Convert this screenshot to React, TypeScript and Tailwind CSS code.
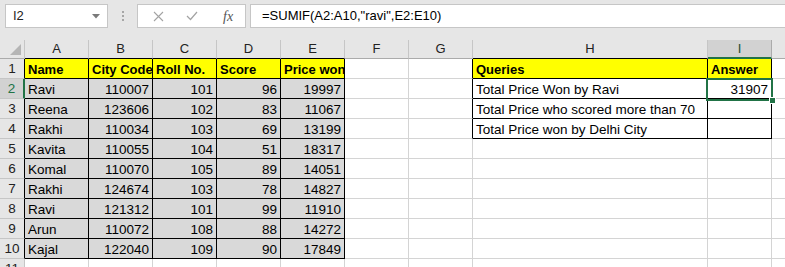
import React from 'react';

type Col = { key: string; w: string };

const COLS: Col[] = [
  { key: 'A', w: 'w-[64px]' },
  { key: 'B', w: 'w-[64px]' },
  { key: 'C', w: 'w-[64px]' },
  { key: 'D', w: 'w-[64px]' },
  { key: 'E', w: 'w-[64px]' },
  { key: 'F', w: 'w-[64px]' },
  { key: 'G', w: 'w-[64px]' },
  { key: 'H', w: 'w-[235px]' },
  { key: 'I', w: 'w-[64px]' },
];

const PEOPLE: (string | number)[][] = [
  ['Ravi', 110007, 101, 96, 19997],
  ['Reena', 123606, 102, 83, 11067],
  ['Rakhi', 110034, 103, 69, 13199],
  ['Kavita', 110055, 104, 51, 18317],
  ['Komal', 110070, 105, 89, 14051],
  ['Rakhi', 124674, 103, 78, 14827],
  ['Ravi', 121312, 101, 99, 11910],
  ['Arun', 110072, 108, 88, 14272],
  ['Kajal', 122040, 109, 90, 17849],
];

const HEAD = ['Name', 'City Code', 'Roll No.', 'Score', 'Price won'];

const QUERIES = [
  'Total Price Won by Ravi',
  'Total Price who scored more than 70',
  'Total Price won by Delhi City',
];

type CellInfo = {
  text: string;
  num?: boolean;
  bold?: boolean;
  fill?: 'yellow' | 'grey';
  rBlack?: boolean;
  bBlack?: boolean;
};

function cellAt(row: number, c: number): CellInfo {
  // c: 0..8 => A..I
  if (row >= 1 && row <= 10 && c <= 4) {
    if (row === 1) return { text: HEAD[c], bold: true, fill: 'yellow', rBlack: true, bBlack: true };
    const v = PEOPLE[row - 2][c];
    return { text: String(v), num: typeof v === 'number', fill: 'grey', rBlack: true, bBlack: true };
  }
  if (row >= 1 && row <= 4 && c >= 7) {
    if (row === 1)
      return { text: c === 7 ? 'Queries' : 'Answer', bold: true, fill: 'yellow', rBlack: true, bBlack: true };
    if (c === 7) return { text: QUERIES[row - 2], rBlack: true, bBlack: true };
    return { text: row === 2 ? '31907' : '', num: true, rBlack: true, bBlack: true };
  }
  if (c === 6 && row >= 1 && row <= 4) return { text: '', rBlack: true };
  return { text: '' };
}

function Cell({ row, c }: { row: number; c: number }) {
  const info = cellAt(row, c);
  return (
    <div
      className={[
        'h-[20px] shrink-0 overflow-hidden whitespace-nowrap border-r border-b px-[3px] pt-[1px] leading-[19px] text-black',
        COLS[c].w,
        info.bold ? 'text-[13px] font-bold' : 'text-[13.5px]',
        info.rBlack ? 'border-r-black' : 'border-r-[#d4d4d4]',
        info.bBlack ? 'border-b-black' : 'border-b-[#d4d4d4]',
        info.fill === 'yellow' ? 'bg-[#ffff00]' : info.fill === 'grey' ? 'bg-[#d9d9d9]' : 'bg-white',
        info.num ? 'text-right' : 'text-left',
      ].join(' ')}
    >
      {info.text}
    </div>
  );
}

function HeaderRow() {
  return (
    <div className="flex h-[19px]">
      <div className="relative h-[19px] w-[25px] shrink-0 border-r border-b border-r-[#c6c6c6] border-b-[#ababab] bg-[#e6e6e6]">
        <svg className="absolute right-[3px] bottom-[3px]" width="11" height="11" viewBox="0 0 11 11">
          <polygon points="11,0 11,11 0,11" fill="#b5b5b5" />
        </svg>
      </div>
      {COLS.map((col) => {
        const sel = col.key === 'I';
        const tableTop = ['A', 'B', 'C', 'D', 'E', 'H'].includes(col.key);
        return (
          <div
            key={col.key}
            className={[
              'h-[19px] shrink-0 border-r text-center text-[13px] leading-[18px]',
              col.w,
              sel
                ? 'border-b-2 border-r-[#ababab] border-b-[#217346] bg-[#d2d2d2] text-[#1e4e33]'
                : 'border-b border-r-[#c6c6c6] bg-[#e6e6e6] text-[#222]',
              !sel && tableTop ? 'border-b-black' : !sel ? 'border-b-[#ababab]' : '',
            ].join(' ')}
          >
            {col.key}
          </div>
        );
      })}
      <div className="h-[19px] flex-1 border-b border-b-[#ababab] bg-[#e6e6e6]" />
    </div>
  );
}

function DataRow({ row }: { row: number }) {
  const sel = row === 2;
  const inTable = row <= 10;
  return (
    <div className="flex h-[20px]">
      <div
        className={[
          'h-[20px] w-[25px] shrink-0 border-b border-b-[#c6c6c6] text-center text-[13.5px] leading-[20px]',
          sel
            ? 'border-r-2 border-r-[#217346] bg-[#d2d2d2] text-[#217346]'
            : inTable
              ? 'border-r border-r-black bg-[#e6e6e6] text-[#222]'
              : 'border-r border-r-[#c6c6c6] bg-[#e6e6e6] text-[#222]',
        ].join(' ')}
      >
        {row}
      </div>
      {COLS.map((col, c) => (
        <Cell key={col.key} row={row} c={c} />
      ))}
      <div className="h-[20px] flex-1 border-b border-b-[#d4d4d4] bg-white" />
    </div>
  );
}

function FormulaBar() {
  return (
    <div className="flex h-[40px] items-start bg-[#e6e6e6] pt-[4px]">
      <div className="ml-[5px] flex h-[24px] w-[103px] items-center justify-between border border-[#c6c6c6] bg-white pl-[7px] pr-[7px]">
        <span className="text-[13px] text-[#222]">I2</span>
        <svg width="8" height="5" viewBox="0 0 8 5">
          <polygon points="0,0 8,0 4,4.5" fill="#7a7a7a" />
        </svg>
      </div>
      <div className="flex h-[24px] w-[29px] flex-col items-center justify-center gap-[2px]">
        <span className="h-[2px] w-[2px] bg-[#a6a6a6]" />
        <span className="h-[2px] w-[2px] bg-[#a6a6a6]" />
        <span className="h-[2px] w-[2px] bg-[#a6a6a6]" />
      </div>
      <div className="flex h-[24px] w-[109px] items-center border border-[#c6c6c6] bg-white">
        <svg className="ml-[15px]" width="11" height="11" viewBox="0 0 11 11">
          <path d="M1 1 L10 10 M10 1 L1 10" stroke="#a3a3a3" strokeWidth="1.1" fill="none" />
        </svg>
        <svg className="ml-[22px]" width="12" height="10" viewBox="0 0 12 10">
          <path d="M1 5 L4.5 8.5 L11 1" stroke="#a3a3a3" strokeWidth="1.2" fill="none" />
        </svg>
        <span className="ml-[25px] font-['Liberation_Serif',serif] text-[14px] italic text-[#555]">fx</span>
      </div>
      <div className="ml-[4px] flex h-[24px] flex-1 items-center border-y border-l border-[#c6c6c6] bg-white pl-[11px]">
        <span className="text-[13px] text-black">=SUMIF(A2:A10,"ravi",E2:E10)</span>
      </div>
    </div>
  );
}

export default function App() {
  const rows = [1, 2, 3, 4, 5, 6, 7, 8, 9, 10, 11];
  return (
    <div className="h-[267px] w-[785px] overflow-hidden bg-white font-['Liberation_Sans',Arial,sans-serif]">
      <FormulaBar />
      <div className="relative">
        <HeaderRow />
        {rows.map((r) => (
          <DataRow key={r} row={r} />
        ))}
        <div className="pointer-events-none absolute left-[706px] top-[38px] h-[23px] w-[67px] border-2 border-[#217346]" />
        <div className="pointer-events-none absolute left-[769px] top-[57px] h-[7px] w-[7px] border border-white bg-[#217346]" />
      </div>
    </div>
  );
}
